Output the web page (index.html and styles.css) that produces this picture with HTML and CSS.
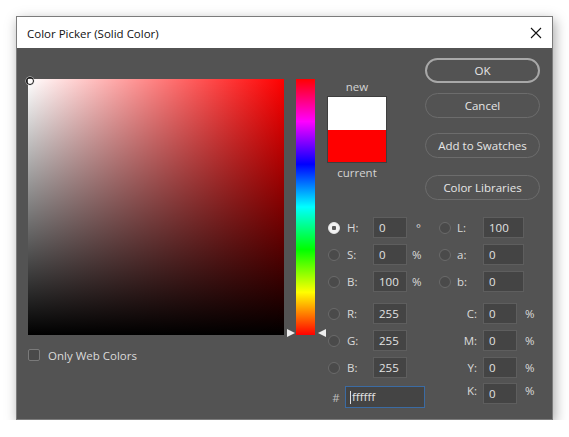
FILE: index.html
```html
<!DOCTYPE html>
<html>
<head>
<meta charset="utf-8">
<link rel="stylesheet" href="styles.css">
</head>
<body>
<div class="dialog">
  <div class="titlebar">
    <span class="title">Color Picker (Solid Color)</span>
    <svg class="close" width="12" height="12" viewBox="0 0 12 12"><path d="M1 1 L11 11 M11 1 L1 11" stroke="#111" stroke-width="1.1" fill="none"/></svg>
  </div>
  <div class="main">
    <div class="left">
      <div class="field"><span class="marker"></span></div>
      <div class="webcolors"><span class="check"></span><span>Only Web Colors</span></div>
    </div>
    <div class="hue"><span class="tri tri-l"></span><span class="tri tri-r"></span></div>
    <div class="right">
      <div class="top">
        <div class="swatch-col">
          <div class="cap cap-new">new</div>
          <div class="swatch"><div class="sw-new"></div><div class="sw-cur"></div></div>
          <div class="cap cap-cur">current</div>
        </div>
        <div class="buttons">
          <div class="btn btn-ok">OK</div>
          <div class="btn btn-cancel">Cancel</div>
          <div class="btn btn-add">Add to Swatches</div>
          <div class="btn btn-lib">Color Libraries</div>
        </div>
      </div>
      <div class="fields">
        <div class="row">
          <span class="radio on"></span><span class="lbl">H:</span><span class="inp">0</span><span class="unit deg">°</span>
          <span class="radio r2"></span><span class="lbl">L:</span><span class="inp wide">100</span>
        </div>
        <div class="row">
          <span class="radio"></span><span class="lbl">S:</span><span class="inp">0</span><span class="unit">%</span>
          <span class="radio r2"></span><span class="lbl">a:</span><span class="inp wide">0</span>
        </div>
        <div class="row">
          <span class="radio"></span><span class="lbl">B:</span><span class="inp">100</span><span class="unit">%</span>
          <span class="radio r2"></span><span class="lbl">b:</span><span class="inp wide">0</span>
        </div>
        <div class="row rgb-first">
          <span class="radio"></span><span class="lbl">R:</span><span class="inp">255</span><span class="unit"></span>
          <span class="lbl2">C:</span><span class="inp">0</span><span class="unit pct">%</span>
        </div>
        <div class="row">
          <span class="radio"></span><span class="lbl">G:</span><span class="inp">255</span><span class="unit"></span>
          <span class="lbl2">M:</span><span class="inp">0</span><span class="unit pct">%</span>
        </div>
        <div class="row">
          <span class="radio"></span><span class="lbl">B:</span><span class="inp">255</span><span class="unit"></span>
          <span class="lbl2">Y:</span><span class="inp">0</span><span class="unit pct">%</span>
        </div>
        <div class="row hexrow">
          <div class="hexpart"><span class="hash">#</span><span class="inp hex"><span class="caret"></span>ffffff</span></div>
          <span class="lbl2">K:</span><span class="inp">0</span><span class="unit pct">%</span>
        </div>
      </div>
    </div>
  </div>
</div>
</body>
</html>
```

FILE: styles.css
```css
html, body {
  margin: 0;
  padding: 0;
  background: #ffffff;
}
body {
  font-family: "Open Sans", "Noto Sans", sans-serif;
  font-size: 11.5px;
}
.dialog {
  margin: 16px 0 0 16px;
  width: 537px;
  height: 404px;
  box-sizing: border-box;
  border: 1px solid #7c7c7c;
  box-shadow: 2px 4px 12px rgba(0, 0, 0, 0.35);
  display: flex;
  flex-direction: column;
}
.titlebar {
  height: 31px;
  background: #ffffff;
  display: flex;
  align-items: center;
  justify-content: space-between;
  padding: 0 10px 0 10px;
  flex: none;
}
.title {
  font-family: "Open Sans", "Noto Sans", sans-serif;
  font-size: 11.5px;
  color: #111;
  margin-top: 1px;
}
.close {
  display: block;
}
.main {
  flex: 1;
  background: #535353;
  display: flex;
  align-items: flex-start;
  padding-left: 11px;
  color: #dadada;
}
.left {
  margin-top: 31px;
  width: 256px;
}
.field {
  position: relative;
  width: 256px;
  height: 256px;
  background: linear-gradient(to top, #000 0%, rgba(0,0,0,0) 100%), linear-gradient(to right, #ffffff 0%, #ff0000 100%);
}
.marker {
  position: absolute;
  left: -2px;
  top: -2px;
  width: 6px;
  height: 6px;
  border: 1.5px solid #111;
  border-radius: 50%;
  box-shadow: 0 0 0 0.5px #ddd;
}
.webcolors {
  margin-top: 14px;
  display: flex;
  align-items: center;
  height: 12px;
}
.check {
  width: 12px;
  height: 12px;
  box-sizing: border-box;
  border: 1px solid #7a7a7a;
  background: #4a4a4a;
  border-radius: 2px;
  margin-right: 8px;
}
.hue {
  position: relative;
  margin-top: 31px;
  margin-left: 12px;
  width: 19px;
  height: 256px;
  background: linear-gradient(to bottom, #ff0000 0%, #ff00ff 16.6%, #0000ff 33.3%, #00ffff 50%, #00ff00 66.6%, #ffff00 83.3%, #ff0000 100%);
}
.tri {
  position: absolute;
  top: 250px;
  width: 0;
  height: 0;
  border-top: 4px solid transparent;
  border-bottom: 4px solid transparent;
}
.tri-l {
  left: -9px;
  border-left: 8px solid #eeeeee;
}
.tri-r {
  left: 22px;
  border-right: 8px solid #eeeeee;
}
.right {
  margin-top: 10px;
  margin-left: 12px;
  flex: 1;
}
.top {
  display: flex;
  align-items: flex-start;
}
.swatch-col {
  width: 60px;
}
.cap {
  text-align: center;
  line-height: 14px;
  color: #d4d4d4;
}
.cap-new {
  margin-top: 22px;
}
.swatch {
  margin-top: 2px;
  height: 67px;
  box-sizing: border-box;
  border: 1px solid #3e3e3e;
  display: flex;
  flex-direction: column;
}
.sw-new {
  flex: 1;
  background: #ffffff;
}
.sw-cur {
  flex: 1;
  background: #ff0000;
}
.cap-cur {
  margin-top: 3px;
}
.buttons {
  margin-left: 38px;
  width: 115px;
  display: flex;
  flex-direction: column;
}
.btn {
  height: 25px;
  box-sizing: border-box;
  border: 1px solid #6c6c6c;
  border-radius: 13px;
  text-align: center;
  line-height: 23px;
  color: #e6e6e6;
}
.btn-ok {
  border: 2px solid #a8a8a8;
  line-height: 21px;
}
.btn-cancel {
  margin-top: 10px;
}
.btn-add {
  margin-top: 15px;
}
.btn-lib {
  margin-top: 17px;
}
.fields {
  margin-top: 17px;
  display: flex;
  flex-direction: column;
  gap: 6px;
}
.row {
  display: flex;
  align-items: center;
  height: 21px;
}
.rgb-first {
  margin-top: 5px;
}
.radio {
  width: 12px;
  height: 12px;
  box-sizing: border-box;
  border-radius: 50%;
  border: 1px solid #6a6a6a;
  background: #4a4a4a;
  margin-left: 1px;
  margin-right: 7px;
  flex: none;
}
.radio.r2 {
  margin-right: 6px;
}
.radio.on {
  background: radial-gradient(circle, #5a5a5a 0 2px, #f2f2f2 2.5px);
  border-color: #e8e8e8;
}
.lbl {
  width: 26px;
  flex: none;
}
.inp {
  width: 34px;
  height: 21px;
  box-sizing: border-box;
  background: #444444;
  border: 1px solid #5e5e5e;
  padding-left: 5px;
  line-height: 19px;
  color: #e2e2e2;
  flex: none;
}
.inp.wide {
  width: 41px;
}
.unit {
  width: 31px;
  box-sizing: border-box;
  padding-left: 5px;
  flex: none;
}
.unit.deg {
  padding-left: 9px;
}
.unit.pct {
  padding-left: 8px;
  width: auto;
}
.lbl2 {
  width: 45px;
  box-sizing: border-box;
  text-align: right;
  padding-right: 6px;
  flex: none;
}
.hexrow {
  align-items: flex-start;
  margin-top: -1px;
}
.hexpart {
  width: 111px;
  display: flex;
  align-items: center;
  margin-top: 3px;
  flex: none;
}
.hash {
  width: 18px;
  text-align: center;
  color: #bdbdbd;
}
.inp.hex {
  width: 80px;
  height: 22px;
  border: 1px solid #3b6ba3;
  line-height: 20px;
  padding-left: 4px;
  display: flex;
  align-items: center;
}
.caret {
  display: inline-block;
  width: 1px;
  height: 13px;
  background: #e0e0e0;
  margin-right: 1px;
}
```
